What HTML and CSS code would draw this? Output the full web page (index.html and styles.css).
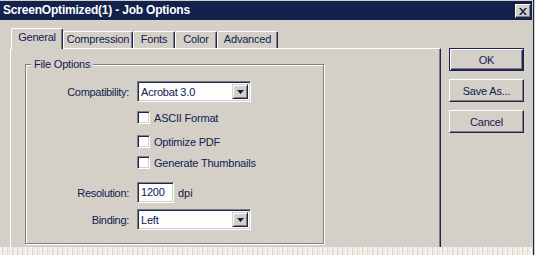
FILE: index.html
```html
<!DOCTYPE html>
<html lang="en">
<head>
    <meta charset="UTF-8">
    <meta name="viewport" content="width=device-width, initial-scale=1.0">
    <title>Job Options</title>
    <link rel="stylesheet" href="styles.css">
</head>
<body>

    <div class="window">
        <div class="titlebar">
            <span class="title">ScreenOptimized(1) - Job Options</span>
            <span class="close-btn">
                <svg width="8" height="7" viewBox="0 0 8 7">
                    <path d="M0 0h2l2 2.5L6 0h2L5 3.5 8 7H6L4 4.5 2 7H0l3-3.5z" fill="#10204f"/>
                </svg>
            </span>
        </div>

        <div class="main">
            <div class="tabs-area">
                <div class="tab-strip">
                    <div class="tab active" style="width: 52px">General</div>
                    <div class="tab" style="width: 70px">Compression</div>
                    <div class="tab" style="width: 42px">Fonts</div>
                    <div class="tab" style="width: 42px">Color</div>
                    <div class="tab" style="width: 61px">Advanced</div>
                </div>

                <div class="tab-panel">
                    <div class="group">
                        <div class="group-title">File Options</div>

                        <div class="row row-compat">
                            <span class="field-label">Compatibility:</span>
                            <div class="combo">
                                <span class="combo-text">Acrobat 3.0</span>
                                <span class="combo-btn">
                                    <svg width="7" height="4" viewBox="0 0 7 4"><path d="M0 0h7L3.5 4z" fill="#10204f"/></svg>
                                </span>
                            </div>
                        </div>

                        <div class="check-row cb-ascii"><span class="checkbox"></span>ASCII Format</div>
                        <div class="check-row cb-optimize"><span class="checkbox"></span>Optimize PDF</div>
                        <div class="check-row cb-thumbs"><span class="checkbox"></span>Generate Thumbnails</div>

                        <div class="row row-res">
                            <span class="field-label">Resolution:</span>
                            <div class="edit">1200</div>
                            <span class="unit">dpi</span>
                        </div>

                        <div class="row row-binding">
                            <span class="field-label">Binding:</span>
                            <div class="combo">
                                <span class="combo-text">Left</span>
                                <span class="combo-btn">
                                    <svg width="7" height="4" viewBox="0 0 7 4"><path d="M0 0h7L3.5 4z" fill="#10204f"/></svg>
                                </span>
                            </div>
                        </div>
                    </div>
                </div>
            </div>

            <div class="buttons">
                <div class="btn default"><span>OK</span></div>
                <div class="btn"><span>Save As...</span></div>
                <div class="btn"><span>Cancel</span></div>
            </div>
        </div>

        <div class="cutoff"></div>
    </div>

</body>
</html>
```

FILE: styles.css
```css
body {
    margin: 0;
    padding: 0;
    background-color: #d4d0c8;
    font-family: "Liberation Sans", Arial, sans-serif;
    font-size: 11px;
    color: #10204f;
}

.window {
    width: 533px;
    height: 255px;
    border-right: 1px solid #1c2450;
    display: flex;
    flex-direction: column;
    overflow: hidden;
}

/* title bar */
.titlebar {
    margin-top: 1px;
    height: 19px;
    width: 532px;
    background-color: #13224d;
    display: flex;
    align-items: flex-start;
    justify-content: space-between;
}

.title {
    color: #fff;
    font-weight: bold;
    font-size: 12px;
    line-height: 19px;
    padding-left: 3px;
    letter-spacing: -0.2px;
}

.close-btn {
    margin-top: 3px;
    margin-right: 1px;
    width: 14px;
    height: 12px;
    background-color: #d4d0c8;
    border-top: 1px solid #fff;
    border-left: 1px solid #fff;
    border-right: 1px solid #1c2450;
    border-bottom: 1px solid #1c2450;
    box-shadow: inset -1px -1px 0 #808080;
    display: flex;
    align-items: center;
    justify-content: center;
}

/* body */
.main {
    flex: 1;
    display: flex;
    min-height: 0;
}

.tabs-area {
    margin-left: 10px;
    width: 431px;
    display: flex;
    flex-direction: column;
}

.tab-strip {
    display: flex;
    align-items: flex-end;
    height: 20px;
    padding-top: 8px;
    padding-left: 1px;
}

.tab {
    box-sizing: border-box;
    height: 17px;
    border-top: 1px solid #fff;
    border-left: 1px solid #fff;
    border-right: 1px solid #1c2450;
    border-radius: 2px 2px 0 0;
    box-shadow: inset -1px 0 0 #808080;
    text-align: center;
    line-height: 15px;
    letter-spacing: -0.2px;
}

.tab.active {
    position: relative;
    z-index: 1;
    height: 21px;
    margin-bottom: -1px;
    background-color: #d4d0c8;
    line-height: 17px;
}

.tab-panel {
    flex: 1;
    border-top: 1px solid #fff;
    border-left: 1px solid #fff;
    border-right: 1px solid #1c2450;
    box-shadow: inset -1px 0 0 #808080;
    padding: 15px 0 0 14px;
}

/* group box */
.group {
    width: 297px;
    height: 178px;
    border: 1px solid #808080;
    box-shadow: inset 1px 1px 0 #fff, 1px 1px 0 #fff;
}

.group-title {
    width: fit-content;
    margin: -7px 0 0 5px;
    padding: 0 3px;
    line-height: 13px;
    background-color: #d4d0c8;
    letter-spacing: -0.2px;
}

.row {
    display: flex;
    align-items: center;
}

.field-label {
    width: 103px;
    margin-right: 8px;
    text-align: right;
    letter-spacing: -0.3px;
}

.row-compat {
    margin-top: 10px;
}

.row-res {
    margin-top: 13px;
}

.row-binding {
    margin-top: 6px;
}

.combo {
    box-sizing: border-box;
    width: 114px;
    height: 21px;
    background-color: #fdfdfb;
    border-top: 1px solid #808080;
    border-left: 1px solid #808080;
    border-right: 1px solid #fff;
    border-bottom: 1px solid #fff;
    box-shadow: inset 1px 1px 0 #1c2450, inset -1px -1px 0 #d4d0c8;
    display: flex;
    align-items: center;
    justify-content: space-between;
    padding: 2px;
}

.combo-text {
    padding-left: 1px;
    letter-spacing: -0.2px;
}

.combo-btn {
    box-sizing: border-box;
    width: 16px;
    height: 15px;
    background-color: #d4d0c8;
    border-top: 1px solid #d4d0c8;
    border-left: 1px solid #d4d0c8;
    border-right: 1px solid #1c2450;
    border-bottom: 1px solid #1c2450;
    box-shadow: inset 1px 1px 0 #fff, inset -1px -1px 0 #808080;
    display: flex;
    align-items: center;
    justify-content: center;
}

.edit {
    box-sizing: border-box;
    width: 37px;
    height: 21px;
    background-color: #fdfdfb;
    border-top: 1px solid #808080;
    border-left: 1px solid #808080;
    border-right: 1px solid #fff;
    border-bottom: 1px solid #fff;
    box-shadow: inset 1px 1px 0 #1c2450, inset -1px -1px 0 #d4d0c8;
    padding-left: 3px;
    line-height: 19px;
    letter-spacing: -0.2px;
}

.unit {
    margin-left: 4px;
}

/* check boxes */
.check-row {
    display: flex;
    align-items: center;
    height: 13px;
    padding-left: 111px;
    letter-spacing: -0.2px;
}

.cb-ascii {
    margin-top: 9px;
}

.cb-optimize {
    margin-top: 11px;
}

.cb-thumbs {
    margin-top: 8px;
}

.checkbox {
    box-sizing: border-box;
    width: 13px;
    height: 13px;
    margin-right: 4px;
    background-color: #fdfdfb;
    border-top: 1px solid #808080;
    border-left: 1px solid #808080;
    border-right: 1px solid #fff;
    border-bottom: 1px solid #fff;
    box-shadow: inset 1px 1px 0 #1c2450, inset -1px -1px 0 #d4d0c8;
}

/* dialog buttons */
.buttons {
    margin-left: 8px;
    margin-top: 28px;
    display: flex;
    flex-direction: column;
    gap: 8px;
}

.btn {
    box-sizing: border-box;
    width: 75px;
    height: 23px;
    border-top: 1px solid #fff;
    border-left: 1px solid #fff;
    border-right: 1px solid #1c2450;
    border-bottom: 1px solid #1c2450;
    box-shadow: inset -1px -1px 0 #808080;
    display: flex;
    align-items: center;
    justify-content: center;
    letter-spacing: -0.2px;
}

.btn.default {
    border: 1px solid #1c2450;
    box-shadow: inset 1px 1px 0 #fff, inset -1px -1px 0 #1c2450, inset -2px -2px 0 #808080;
}

.cutoff {
    height: 8px;
    background-color: #e4e2dc;
    background-image: repeating-linear-gradient(90deg, #f4f3ef 0 2px, #d9d6ce 2px 3px, #ecebe6 3px 5px);
}
```
